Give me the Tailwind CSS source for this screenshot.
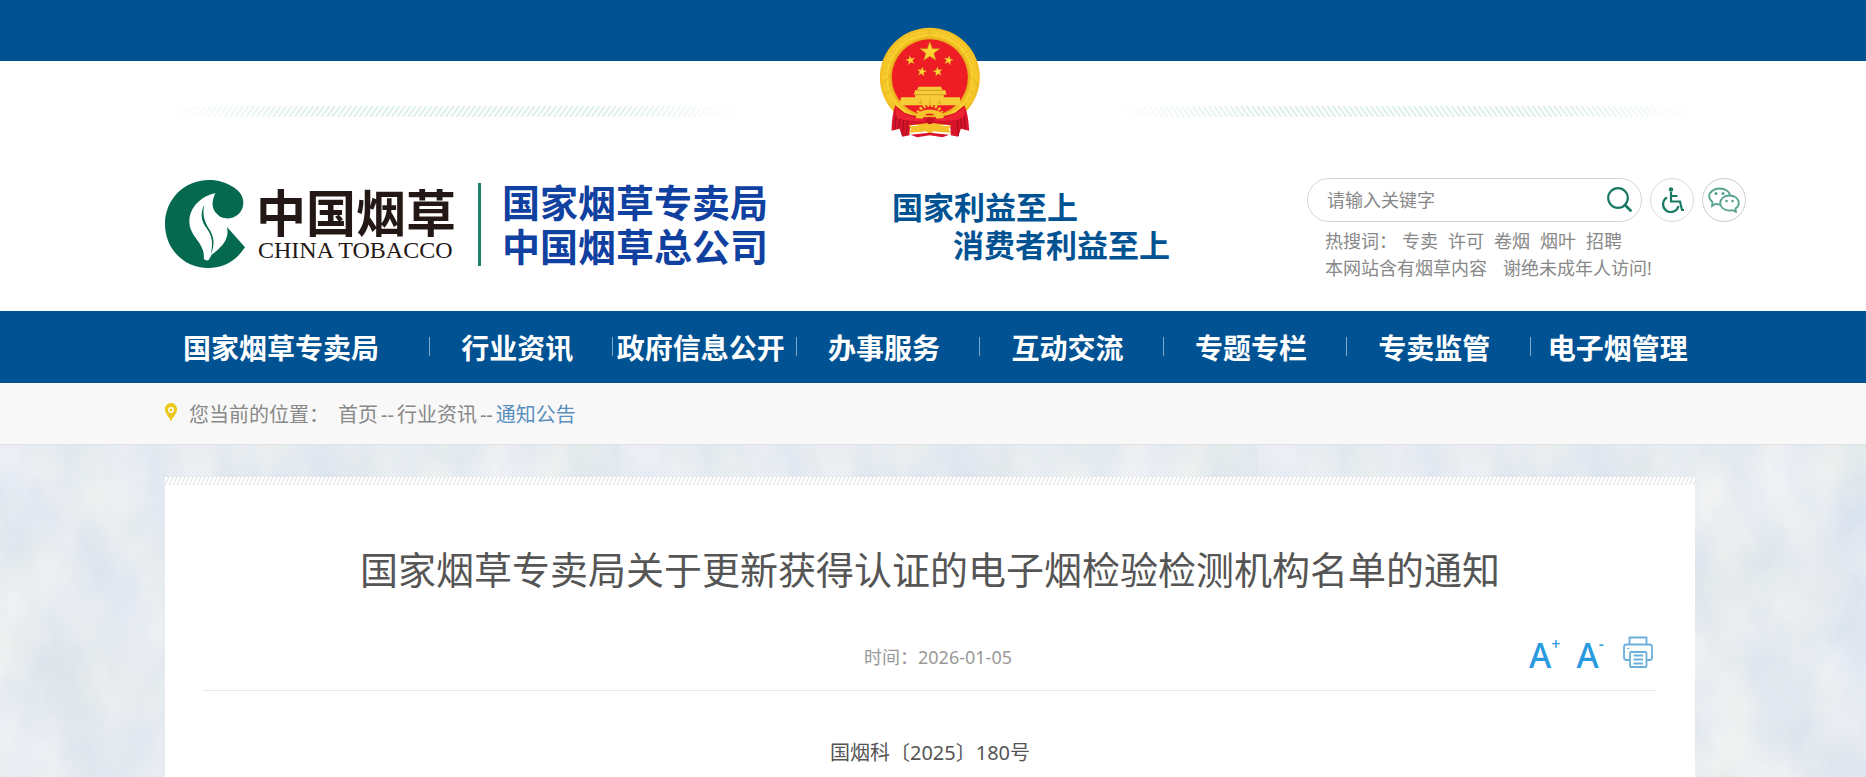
<!DOCTYPE html>
<html lang="zh-CN">
<head>
    <meta charset="UTF-8">
    <meta name="viewport" content="width=device-width, initial-scale=1.0">
    <title>国家烟草专卖局关于更新获得认证的电子烟检验检测机构名单的通知</title>
    <script src="https://cdn.jsdelivr.net/npm/@tailwindcss/browser@4"></script>
</head>
<body class="flex min-h-screen flex-col overflow-x-hidden bg-white font-['Noto_Sans','Noto_Sans_CJK_SC',sans-serif] text-[#888]">
    <!-- Header -->
    <header>
        <div class="h-[61px] bg-[#005293]"></div>
        <div class="pr-[6px]">
            <div class="relative mx-auto max-w-[1530px] pt-[45px]">
                <!-- National emblem -->
                <svg class="absolute -top-[34px] left-1/2 h-[111px] w-[101px] -translate-x-1/2" viewBox="57 51 303 333" aria-hidden="true">
                    <defs>
                        <radialGradient id="gold" cx="50%" cy="50%" r="50%">
                            <stop offset="76%" stop-color="#e5a818" />
                            <stop offset="86%" stop-color="#fbd430" />
                            <stop offset="100%" stop-color="#f0bb22" />
                        </radialGradient>
                        <path id="star" d="M0-10L2.4-3.2 9.5-3.1 3.8 1.2 5.9 8.1 0 4-5.9 8.1-3.8 1.2-9.5-3.1-2.4-3.2z" />
                    </defs>
                    <ellipse cx="208" cy="202" rx="150" ry="149" fill="url(#gold)" />
                    <g fill="none" stroke="#c98a14" stroke-width="2" opacity=".5">
                        <ellipse cx="208" cy="202" rx="133" ry="132" stroke-dasharray="14 5" />
                        <path d="M200 88l8-28 8 28M62 228l38-44M354 228l-38-44M76 252l26-22M340 252l-26-22M90 120l18 14M326 120l-18 14" />
                    </g>
                    <circle cx="208" cy="202" r="114" fill="#ee1c25" />
                    <g fill="#fcd433" stroke="#c88b1a" stroke-width=".5">
                        <use href="#star" transform="translate(208 126) scale(3.1)" />
                        <use href="#star" transform="translate(150 151) rotate(-12) scale(1.5)" />
                        <use href="#star" transform="translate(264 151) rotate(12) scale(1.5)" />
                        <use href="#star" transform="translate(184 185) rotate(10) scale(1.5)" />
                        <use href="#star" transform="translate(232 185) rotate(-10) scale(1.5)" />
                    </g>
                    <path d="M174 230h68l4 10h8l4 14h-8v8h48l4 24H116l6-24h42v-8h-4l4-14h6z" fill="#f8cc38" />
                    <path d="M168 241h80M162 254h92" stroke="#c99220" stroke-width="2.5" />
                    <path d="M180 269v12m-8-4q8 8 16 0M237 269v12m-8-4q8 8 16 0M208 267v16" stroke="#d09a1e" stroke-width="2" fill="none" />
                    <path d="M104 286q-10 30-11 76l24-6 8 24 22-4 2-30 60-8 60 8 2 30 22 4 8-24 25 6q-2-46-14-76l-28 22q-76 28-152 0z" fill="#d8142a" />
                    <path d="M105 290q24 30 100 40-62 8-98-8zM312 290q-24 30-100 40 62 8 98-8z" fill="#ef2433" />
                    <path d="M107 318l-4 40M119 326l-4 28M130 330l-4 48M141 332l-3 40M290 330l4 48M300 326l4 28M310 318l5 40" stroke="#9f0d20" stroke-width="3" fill="none" />
                    <path d="M166 324c2-34 82-34 84 0l-22 2a22 22 0 0 0-42 0z" fill="#f6c52e" />
                    <path d="M172 308a40 40 0 0 1 72 0" fill="none" stroke="#f6c52e" stroke-width="10" stroke-dasharray="7 5" />
                    <path d="M144 346q36 6 64-10 28 16 64 10l-8 12 8 10q-34-2-64-6-30 4-64 6l8-10z" fill="#f5c02a" />
                    <circle cx="208" cy="357" r="13" fill="#f5c02a" />
                    <circle cx="208" cy="332" r="10" fill="#c70f22" />
                    <path d="M150 374l58-6 58 6-20 8-38-6-38 6z" fill="#d8142a" />
                </svg>
                <!-- Hatched ornaments on both sides of the emblem -->
                <div class="flex justify-between" aria-hidden="true">
                    <svg class="h-[11px] w-[38%]">
                        <defs>
                            <pattern id="hatchLeft" width="5.4" height="11" patternUnits="userSpaceOnUse">
                                <path d="M-5.4 11L2.6 0M0 11L8 0M5.4 11L13.4 0" stroke="#dcefea" stroke-width="2" />
                            </pattern>
                            <pattern id="hatchRight" width="5.4" height="11" patternUnits="userSpaceOnUse">
                                <path d="M-8 0L0 11M-2.6 0L5.4 11M2.8 0L10.8 11" stroke="#dcefea" stroke-width="2" />
                            </pattern>
                            <linearGradient id="fade">
                                <stop offset="0" stop-color="#fff" />
                                <stop offset=".25" stop-color="#fff" stop-opacity="0" />
                                <stop offset=".75" stop-color="#fff" stop-opacity="0" />
                                <stop offset="1" stop-color="#fff" />
                            </linearGradient>
                        </defs>
                        <rect width="100%" height="11" fill="url(#hatchLeft)" />
                        <rect width="100%" height="11" fill="url(#fade)" />
                    </svg>
                    <svg class="h-[11px] w-[38%]">
                        <rect width="100%" height="11" fill="url(#hatchRight)" />
                        <rect width="100%" height="11" fill="url(#fade)" />
                    </svg>
                </div>

                <div class="flex h-[194px] items-start pt-[61px]">
                    <!-- Logo -->
                    <a href="#" class="flex shrink-0 items-center pt-[2px]">
                        <svg class="h-[88px] w-[80px]" viewBox="46 44 240 264" aria-hidden="true">
                            <path d="M178 44C206 44 231 52 252 66C272 80 281 94 281 113C281 140 258 160 231 160C218 160 210 158 203 153L232 185L286 246C260 286 222 308 176 308C100 308 46 248 46 176C46 103 103 44 178 44z" fill="#04694f" />
                            <path d="M197 84C158 91 119 124 119 169C120 211 158 230 162 264L163 281Q169 288 177 284L186 268Q226 240 232 213Q235 199 232 185L237 160Q214 160 203 147C184 130 186 108 197 84z" fill="#fff" />
                            <path d="M164 118C151 143 154 166 171 189C188 213 190 229 184 267C196 236 194 215 178 190C162 166 158 143 164 118z" fill="#04694f" />
                        </svg>
                        <span class="ml-[11px] flex flex-col pt-[2px] text-[#231815]">
                            <span class="text-[50px] leading-[50px] font-bold">中国烟草</span>
                            <span class="pl-[2px] font-['Liberation_Serif',serif] text-[24px] leading-[24px]">CHINA TOBACCO</span>
                        </span>
                        <span class="ml-[22px] h-[83px] w-[3px] bg-[#1f7f68]"></span>
                        <span class="ml-[21px] text-[38px] leading-[44px] font-bold text-[#1040a0]">国家烟草专卖局<br>中国烟草总公司</span>
                    </a>

                    <!-- Slogan -->
                    <p class="ml-[124px] shrink-0 pt-[10px] text-[31px] leading-[38px] font-bold text-[#005293]">国家利益至上<br><span class="pl-[61px]">消费者利益至上</span></p>

                    <!-- Search -->
                    <div class="-mr-[52px] ml-auto w-[440px] shrink-0 text-[18px] leading-[27px]">
                        <div class="flex items-center gap-[8px]">
                            <form class="flex h-[44px] w-[335px] items-center rounded-full border border-[#d4d4d4] pr-[9px] pl-[19px]">
                                <input type="text" aria-label="搜索" placeholder="请输入关键字" class="min-w-0 flex-1 outline-none placeholder:text-[#888]">
                                <button type="submit" aria-label="搜索">
                                    <svg class="h-[26px] w-[26px]" viewBox="0 0 26 26" fill="none" stroke="#187a63" stroke-width="2.2" stroke-linecap="round">
                                        <circle cx="12" cy="11" r="9.800" />
                                        <path d="M19 18l5.500 5.500" stroke-width="2.800" />
                                    </svg>
                                </button>
                            </form>
                            <a href="#" aria-label="无障碍" class="flex h-[44px] w-[44px] items-center justify-center rounded-full border border-[#dcdcdc]">
                                <svg class="h-[26px] w-[26px]" viewBox="0 0 26 26" fill="none" stroke="#187a63" stroke-width="2.200">
                                    <circle cx="12" cy="2.500" r="2.200" fill="#187a63" stroke="none" />
                                    <path d="M12 5v9.500h9l2 8.500h2M12 9h6.500M8 10.500a7.800 7.800 0 1 0 11.500 8.500" />
                                </svg>
                            </a>
                            <a href="#" aria-label="微信" class="flex h-[44px] w-[44px] items-center justify-center rounded-full border border-[#ccc]">
                                <svg class="h-[26px] w-[32px]" viewBox="0 0 32 26" fill="none" stroke="#56a08e" stroke-width="1.800">
                                    <path d="M12 17.500q-2.500 0-4.500-.7L4 19l.5-4C2.300 13.300 1.200 11.500 1.200 9.300 1.200 5 6 1.500 11.800 1.500c5 0 9.300 2.700 10.200 6.500" />
                                    <path d="M21.500 8.500c5.200 0 9.300 3.300 9.300 7.400 0 2.400-1.400 4.200-3.300 5.600l.4 3.300-3-1.600q-1.600.4-3.400.4c-5.200 0-9.300-3.400-9.300-7.700s4.100-7.400 9.300-7.400z" />
                                    <g fill="#56a08e" stroke="none">
                                        <circle cx="8" cy="6.500" r="1.500" /><circle cx="15" cy="6.500" r="1.500" />
                                        <circle cx="18.500" cy="14" r="1.300" /><circle cx="24.500" cy="14" r="1.300" />
                                    </g>
                                </svg>
                            </a>
                        </div>
                        <div class="flex gap-[10px] pt-[6px] pl-[18px]">
                            <span class="-mr-[5px]">热搜词：</span>
                            <a href="#">专卖</a>
                            <a href="#">许可</a>
                            <a href="#">卷烟</a>
                            <a href="#">烟叶</a>
                            <a href="#">招聘</a>
                        </div>
                        <p class="flex gap-4 pl-[18px]"><span>本网站含有烟草内容</span><span>谢绝未成年人访问!</span></p>
                    </div>
                </div>
            </div>
        </div>
    </header>

    <!-- Navigation -->
    <nav class="bg-[#005293] pr-[6px] text-[28px] font-bold whitespace-nowrap text-white">
        <div class="mx-auto max-w-[1530px]">
            <ul class="-mr-[18px] flex h-[72px] items-center pt-[2px]">
                <li class="w-[264px] shrink-0 pl-[18px]"><a href="#">国家烟草专卖局</a></li>
                <li class="flex flex-1 items-center"><span class="mb-[4px] h-[19px] w-px bg-[#7fa9ca]"></span><a href="#" class="flex-1 pr-[8px] text-center">行业资讯</a></li>
                <li class="flex flex-1 items-center"><span class="mb-[4px] h-[19px] w-px bg-[#7fa9ca]"></span><a href="#" class="flex-1 pr-[8px] text-center">政府信息公开</a></li>
                <li class="flex flex-1 items-center"><span class="mb-[4px] h-[19px] w-px bg-[#7fa9ca]"></span><a href="#" class="flex-1 pr-[8px] text-center">办事服务</a></li>
                <li class="flex flex-1 items-center"><span class="mb-[4px] h-[19px] w-px bg-[#7fa9ca]"></span><a href="#" class="flex-1 pr-[8px] text-center">互动交流</a></li>
                <li class="flex flex-1 items-center"><span class="mb-[4px] h-[19px] w-px bg-[#7fa9ca]"></span><a href="#" class="flex-1 pr-[8px] text-center">专题专栏</a></li>
                <li class="flex flex-1 items-center"><span class="mb-[4px] h-[19px] w-px bg-[#7fa9ca]"></span><a href="#" class="flex-1 pr-[8px] text-center">专卖监管</a></li>
                <li class="flex flex-1 items-center"><span class="mb-[4px] h-[19px] w-px bg-[#7fa9ca]"></span><a href="#" class="flex-1 pr-[8px] text-center">电子烟管理</a></li>
            </ul>
        </div>
    </nav>

    <!-- Breadcrumb -->
    <div class="border-b border-[#e2e2e2] bg-[#f8f8f8] pr-[6px]">
        <div class="mx-auto flex h-[61px] max-w-[1530px] items-center pt-[2px] text-[20px]">
            <svg class="mb-[4px] h-[19px] w-[12px]" viewBox="0 0 12 19" aria-hidden="true">
                <path d="M6 0a6 6 0 0 1 6 6.500C12 11 7.500 14 6 18.500 4.500 14 0 11 0 6.500A6 6 0 0 1 6 0z" fill="#ecc81c" />
                <circle cx="6" cy="7" r="2.200" fill="none" stroke="#fff" stroke-width="1.400" />
            </svg>
            <span class="ml-3">您当前的位置：</span>
            <span class="ml-[9px]"><a href="#">首页</a><span class="px-[3px]">--</span><a href="#">行业资讯</a><span class="px-[3px]">--</span><a href="#" class="text-[#5a8fbd]">通知公告</a></span>
        </div>
    </div>

    <!-- Article -->
    <main class="relative flex-1 overflow-hidden bg-[#e5eaef] pt-[32px] pr-[6px]">
        <svg class="absolute inset-0 h-full w-full" aria-hidden="true">
            <defs>
                <filter id="plaster" x="0" y="0" width="100%" height="100%" color-interpolation-filters="sRGB">
                    <feTurbulence type="fractalNoise" baseFrequency=".016 .011" numOctaves="6" seed="7" />
                    <feColorMatrix values=".13 0 0 0 .835  .09 .01 0 0 .87  .03 0 .04 0 .905  0 0 0 0 1" />
                </filter>
                <rect id="tile" width="638" height="1200" filter="url(#plaster)" />
            </defs>
            <use href="#tile" x="-18" />
            <use href="#tile" x="620" />
            <use href="#tile" x="1258" />
        </svg>
        <article class="relative mx-auto h-full max-w-[1530px] bg-white pb-6">
            <svg class="block h-[8px] w-full" aria-hidden="true">
                <pattern id="hatchCard" width="4" height="8" patternUnits="userSpaceOnUse">
                    <path d="M-4 8L0 0M0 8L4 0M4 8L8 0" stroke="#dcdcdc" stroke-width="1" />
                </pattern>
                <rect width="100%" height="8" fill="url(#hatchCard)" />
            </svg>
            <div class="px-[38px] pt-[56px]">
                <h1 class="text-center text-[38px] leading-[56px] text-[#555]">国家烟草专卖局关于更新获得认证的电子烟检验检测机构名单的通知</h1>
                <div class="mt-[28px] flex h-[66px] items-center border-b border-[#e8e8e8] text-[18px] text-[#999]">
                    <p class="ml-[144px] flex-1 text-center">时间：2026-01-05</p>
                    <div class="flex w-[128px] items-start gap-[16px] pr-[4px] pb-[10px] text-[#2a9ade]">
                        <button type="button" aria-label="放大字号" class="flex h-[34px] items-start text-[34px] leading-[38px] font-medium">A<span class="text-[16px] leading-[16px]">+</span></button>
                        <button type="button" aria-label="缩小字号" class="flex h-[34px] items-start text-[34px] leading-[38px] font-medium">A<span class="text-[16px] leading-[16px]">-</span></button>
                        <button type="button" aria-label="打印" class="ml-auto">
                            <svg class="h-[32px] w-[30px]" viewBox="0 0 30 32" fill="none" stroke="#6bb0dc" stroke-width="1.800">
                                <path d="M6.500 8V1.500h17V8M6.500 24H3.500q-2.500 0-2.500-2.500V11q0-2.500 2.500-2.500h23q2.500 0 2.500 2.500v10.500q0 2.500-2.500 2.500h-3" />
                                <rect x="7" y="16" width="16.500" height="15" rx="1" />
                                <path d="M10.500 19.500h9.500M10.500 23.500h9.500M10.500 27.500h9.500" />
                                <path d="M4 12.500h2" stroke-width="1.200" />
                            </svg>
                        </button>
                    </div>
                </div>
                <p class="mt-[46px] text-center text-[20px] leading-[32px] text-[#555]">国烟科〔2025〕180号</p>
            </div>
        </article>
    </main>
</body>
</html>
